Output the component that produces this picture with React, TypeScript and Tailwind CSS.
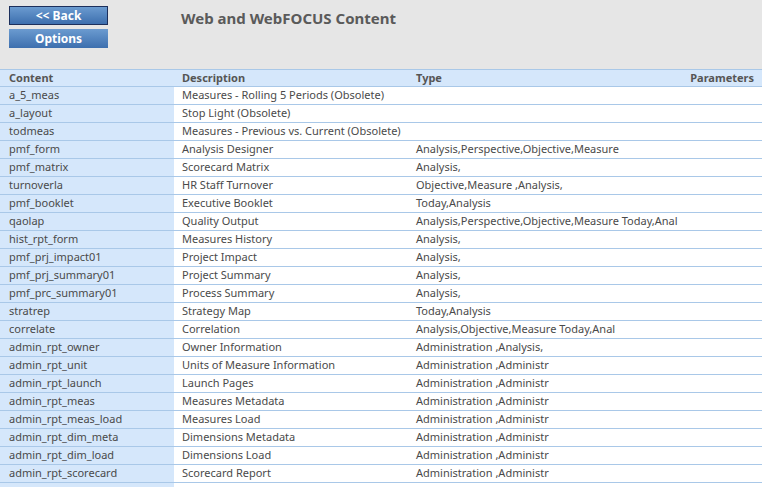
const rows: [string, string, string][] = [
  ["a_5_meas", "Measures - Rolling 5 Periods (Obsolete)", ""],
  ["a_layout", "Stop Light (Obsolete)", ""],
  ["todmeas", "Measures - Previous vs. Current (Obsolete)", ""],
  ["pmf_form", "Analysis Designer", "Analysis,Perspective,Objective,Measure"],
  ["pmf_matrix", "Scorecard Matrix", "Analysis,"],
  ["turnoverla", "HR Staff Turnover", "Objective,Measure ,Analysis,"],
  ["pmf_booklet", "Executive Booklet", "Today,Analysis"],
  ["qaolap", "Quality Output", "Analysis,Perspective,Objective,Measure Today,Anal"],
  ["hist_rpt_form", "Measures History", "Analysis,"],
  ["pmf_prj_impact01", "Project Impact", "Analysis,"],
  ["pmf_prj_summary01", "Project Summary", "Analysis,"],
  ["pmf_prc_summary01", "Process Summary", "Analysis,"],
  ["stratrep", "Strategy Map", "Today,Analysis"],
  ["correlate", "Correlation", "Analysis,Objective,Measure Today,Anal"],
  ["admin_rpt_owner", "Owner Information", "Administration ,Analysis,"],
  ["admin_rpt_unit", "Units of Measure Information", "Administration ,Administr"],
  ["admin_rpt_launch", "Launch Pages", "Administration ,Administr"],
  ["admin_rpt_meas", "Measures Metadata", "Administration ,Administr"],
  ["admin_rpt_meas_load", "Measures Load", "Administration ,Administr"],
  ["admin_rpt_dim_meta", "Dimensions Metadata", "Administration ,Administr"],
  ["admin_rpt_dim_load", "Dimensions Load", "Administration ,Administr"],
  ["admin_rpt_scorecard", "Scorecard Report", "Administration ,Administr"],
];

const btn =
  "w-[99px] h-[19px] flex items-center justify-center text-white font-bold text-[12px] bg-gradient-to-b from-[#6b9bd0] to-[#3d6fae]";

export default function App() {
  return (
    <div className="w-[762px] h-[487px] overflow-hidden bg-white text-[11px] text-[#4a4a4a] font-['Liberation_Sans',Arial,sans-serif]">
      <div className="h-[69px] bg-[#e6e6e6] flex">
        <div className="pl-[9px] pt-[6px] flex flex-col gap-[4px]">
          <div className={btn + " border border-[#1c2f5c]"}>&lt;&lt; Back</div>
          <div className={btn}>Options</div>
        </div>
        <div className="ml-[73px] pt-[7px] text-[15px] font-bold text-[#5a5a5a]">Web and WebFOCUS Content</div>
      </div>
      <div className="grid grid-cols-[174px_234px_1fr_auto] h-[18px] items-center bg-[#d5e7fb] border-t border-b border-[#a9c8e8] font-bold text-[#555]">
        <div className="pl-[9px]">Content</div>
        <div className="pl-[8px]">Description</div>
        <div className="pl-[8px]">Type</div>
        <div className="pr-[8px]">Parameters</div>
      </div>
      {rows.map(([c, d, t]) => (
        <div key={c} className="grid grid-cols-[174px_234px_1fr] h-[18px] items-center border-b border-[#a9c8e8]">
          <div className="pl-[9px] h-full flex items-center bg-[#d5e7fb]">{c}</div>
          <div className="pl-[8px] whitespace-nowrap overflow-hidden">{d}</div>
          <div className="pl-[8px] whitespace-nowrap overflow-hidden">{t}</div>
        </div>
      ))}
      <div className="w-[174px] h-[18px] bg-[#d5e7fb]" />
    </div>
  );
}
